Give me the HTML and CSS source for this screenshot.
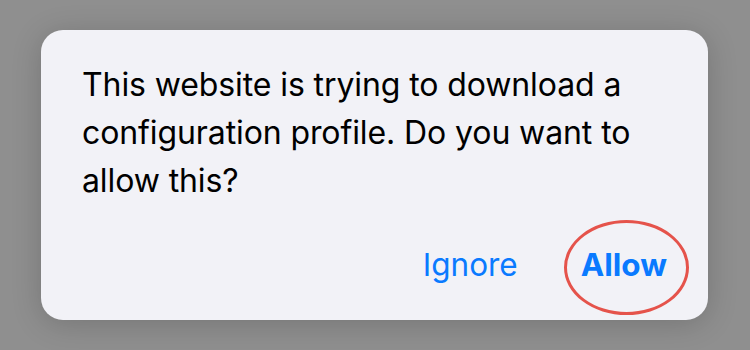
FILE: index.html
```html
<!DOCTYPE html>
<html>
<head>
<meta charset="utf-8">
<link rel="stylesheet" href="styles.css">
</head>
<body>
<div class="stage">
  <div class="alert">
    <p class="message">This website is trying to download a configuration profile. Do you want to allow this?</p>
    <div class="actions">
      <span class="btn">Ignore</span>
      <span class="btn primary">Allow<span class="ring"></span></span>
    </div>
  </div>
</div>
</body>
</html>
```
FILE: styles.css
```css
html, body {
  margin: 0;
  padding: 0;
  width: 750px;
  height: 350px;
  overflow: hidden;
  background: #8f8f8f;
}
.stage {
  padding: 30px 42px 30px 41px;
}
.alert {
  width: 667px;
  height: 290px;
  box-sizing: border-box;
  background: #f2f2f7;
  border-radius: 22px;
  box-shadow: 0 4px 30px rgba(0,0,0,0.18);
  padding: 31px 41px 0 41px;
  font-family: Inter, "Liberation Sans", sans-serif;
}
.message {
  margin: 0;
  font-size: 32px;
  line-height: 48px;
  color: #000;
  letter-spacing: -0.1px;
}
.actions {
  display: flex;
  justify-content: flex-end;
  gap: 63px;
  margin-top: 36px;
  font-size: 31.5px;
  line-height: 48px;
}
.btn {
  color: #0a7aff;
  position: relative;
}
.primary {
  font-weight: 700;
}
.ring {
  position: absolute;
  left: -17px;
  top: -21px;
  width: 119px;
  height: 89px;
  border: 3px solid #e5534b;
  border-radius: 50%;
}
```
